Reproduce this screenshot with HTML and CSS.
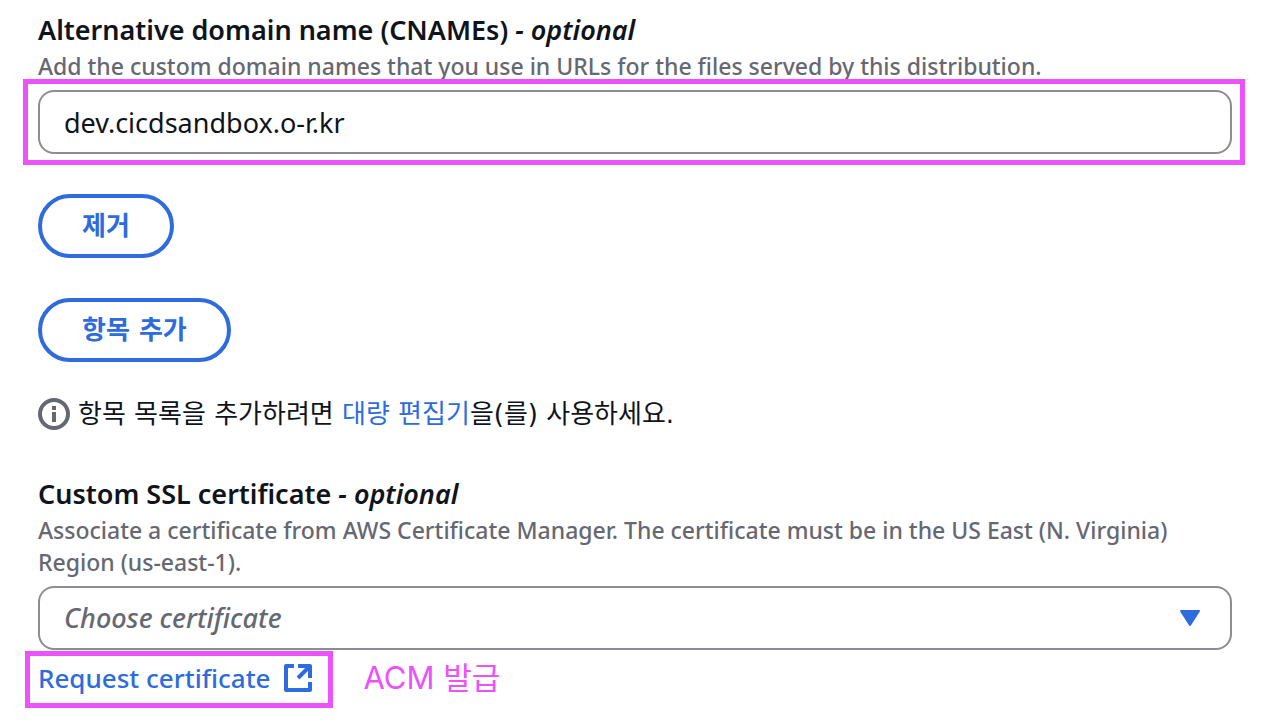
FILE: index.html
```html
<!DOCTYPE html>
<html lang="ko">
<head>
<meta charset="utf-8">
<meta name="viewport" content="width=device-width, initial-scale=1">
<title>Distribution settings</title>
<link rel="stylesheet" href="styles.css">
</head>
<body>
<main class="settings">
  <section class="group">
    <div class="field">
      <label class="field-label" for="cname">Alternative domain name (CNAMEs) <i>- optional</i></label>
      <p class="field-hint" id="cname-hint">Add the custom domain names that you use in URLs for the files served by this distribution.</p>
      <div class="control highlight highlight-wide">
        <input class="input" id="cname" type="text" value="dev.cicdsandbox.o-r.kr" aria-describedby="cname-hint">
      </div>
    </div>
    <button class="button" type="button">제거</button>
    <button class="button" type="button">항목 추가</button>
  </section>

  <p class="info">
    <svg class="info-icon" viewBox="0 0 32 32" aria-hidden="true">
      <circle cx="16" cy="16" r="14" fill="none" stroke="currentColor" stroke-width="4"/>
      <path d="M14 8h4v4h-4zM14 14h4v10h-4z" fill="currentColor"/>
    </svg>
    <span>항목 목록을 추가하려면 <a class="link" href="#">대량 편집기</a>을(를) 사용하세요.</span>
  </p>

  <section class="field">
    <label class="field-label" for="certificate">Custom SSL certificate <i>- optional</i></label>
    <p class="field-hint" id="certificate-hint">Associate a certificate from AWS Certificate Manager. The certificate must be in the US East (N. Virginia) Region (us-east-1).</p>
    <div class="control">
      <select class="input select" id="certificate" aria-describedby="certificate-hint">
        <option>Choose certificate</option>
      </select>
      <svg class="caret" viewBox="0 0 20 16" aria-hidden="true">
        <path d="M1 1h18L10 15z" fill="currentColor" stroke="currentColor" stroke-width="2" stroke-linejoin="round"/>
      </svg>
    </div>
    <div class="request">
      <a class="link request-link highlight highlight-link" href="#">Request certificate
        <svg class="external-icon" viewBox="0 0 28 28" aria-hidden="true">
          <path d="M10 2H2v24h24v-8M14 2h12v12M25 3L14 14" fill="none" stroke="currentColor" stroke-width="4" stroke-linejoin="round"/>
        </svg>
      </a>
      <span class="note">ACM 발급</span>
    </div>
  </section>
</main>
</body>
</html>
```

FILE: styles.css
```css
* {
  box-sizing: border-box;
}

body {
  margin: 0;
  background: #fff;
  color: #0f141a;
  font: 400 27px/40px "Noto Sans", "Noto Sans CJK KR", sans-serif;
}

.settings {
  padding: 10px 40px 20px 38px;
}

.group {
  display: flex;
  flex-direction: column;
  align-items: flex-start;
  gap: 40px;
}

.field {
  width: 100%;
}

.field-label {
  display: block;
  font-weight: 600;
}

.field-hint {
  margin: 0 0 8px;
  color: #656871;
  font-size: 23px;
  font-weight: 500;
  line-height: 32px;
}

.control {
  position: relative;
}

.input {
  display: block;
  width: 100%;
  height: 64px;
  padding: 0 24px;
  border: 2px solid #8c8c94;
  border-radius: 16px;
  background: #fff;
  color: inherit;
  font: inherit;
}

.select {
  appearance: none;
  color: #656871;
  font-style: italic;
  font-weight: 500;
}

.caret {
  position: absolute;
  top: 24px;
  right: 32px;
  width: 20px;
  height: 16px;
  color: #2e6bdd;
  pointer-events: none;
}

.button {
  height: 64px;
  padding: 0 40px;
  border: 4px solid #2e6bdd;
  border-radius: 32px;
  background: #fff;
  color: #2e6bdd;
  font: 700 26px/40px "DejaVu Sans", "Noto Sans CJK KR", sans-serif;
}

.info {
  display: flex;
  align-items: center;
  gap: 8px;
  margin: 32px 0 40px;
  font-family: "DejaVu Sans", "Noto Sans CJK KR", sans-serif;
  font-size: 26px;
}

.info-icon {
  flex: none;
  width: 32px;
  height: 32px;
  color: #656871;
}

.link {
  color: #2e6bdd;
  text-decoration: none;
}

.request {
  display: flex;
  align-items: center;
  gap: 52px;
  margin-top: 8px;
}

.request-link {
  display: flex;
  align-items: center;
  gap: 13px;
  font-size: 26px;
  font-weight: 500;
}

.external-icon {
  width: 28px;
  height: 28px;
}

.highlight {
  position: relative;
}

.highlight::after {
  position: absolute;
  border: 5px solid #ec52fa;
  content: "";
  pointer-events: none;
}

.highlight-wide::after {
  inset: -11px -13px -11px -15px;
}

.highlight-link::after {
  inset: -7px -21px -10px -13px;
}

.note {
  color: #ec52fa;
  font-family: Inter, "Noto Sans CJK KR", sans-serif;
  font-size: 31px;
  font-weight: 400;
}
```
